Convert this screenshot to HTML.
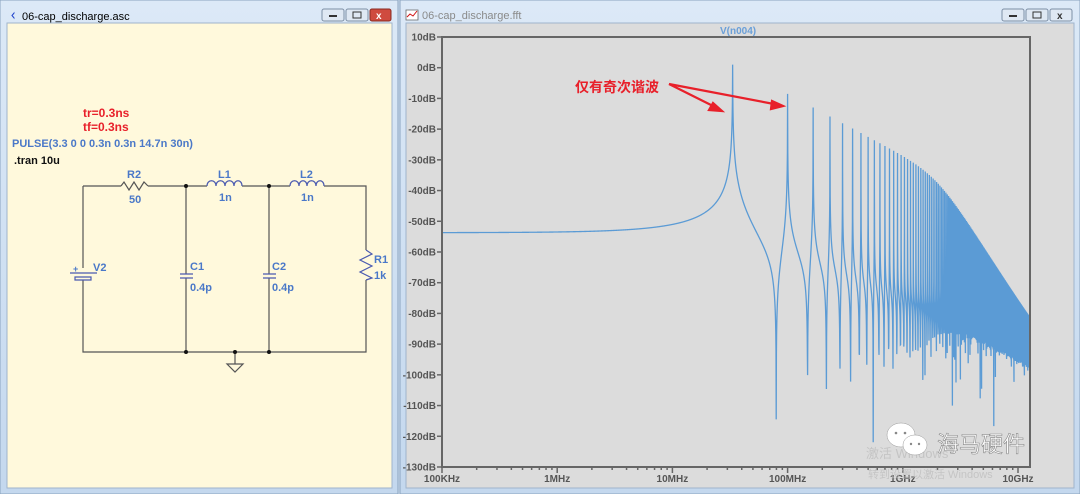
<!DOCTYPE html>
<html><head><meta charset="utf-8"><style>
html,body{margin:0;padding:0;width:1080px;height:494px;overflow:hidden;background:#cfdff0;font-family:"Liberation Sans","Noto Sans CJK SC",sans-serif}
svg{position:absolute;left:0;top:0}
</style></head><body>
<svg width="1080" height="494" viewBox="0 0 1080 494" xmlns="http://www.w3.org/2000/svg">
<defs>
<linearGradient id="tb" x1="0" y1="0" x2="0" y2="1"><stop offset="0" stop-color="#dce9f7"/><stop offset="1" stop-color="#c4d8ee"/></linearGradient>
<clipPath id="pc"><rect x="442" y="37" width="588" height="430"/></clipPath>
</defs>
<rect x="0" y="0" width="398" height="494" fill="url(#tb)" stroke="#8aa3bf"/>
<rect x="7" y="23" width="385" height="465" fill="#fff9dc" stroke="#9fb4cc"/>
<text x="22" y="20" font-size="11" fill="#000">06-cap_discharge.asc</text>
<text x="9" y="20" font-size="13" fill="#2244cc" font-weight="bold">ᚲ</text>
<g>
<rect x="322" y="9" width="22" height="12" rx="2" fill="#dfe8f3" stroke="#7d8fa6"/><rect x="329" y="15" width="8" height="2" fill="#333"/>
<rect x="346" y="9" width="22" height="12" rx="2" fill="#dfe8f3" stroke="#7d8fa6"/><rect x="353" y="12" width="8" height="6" fill="none" stroke="#333"/>
<rect x="370" y="9" width="21" height="12" rx="2" fill="#cf4b3f" stroke="#8a2b22"/><text x="376" y="19" font-size="10" fill="#fff" font-weight="bold">x</text>
</g>
<g stroke="#555" stroke-width="1.2" fill="none">
<path d="M83 186H121M148 186H207M242 186H290M324 186H366V250M366 280V352H83V280M83 268V186"/>
<path d="M121 186l3-4 5 8 5-8 5 8 5-8 4 4"/>
<path d="M186 186V274M186 278V352M269 186V274M269 278V352"/>
<path d="M366 250l6 4-12 6 12 6-12 6 12 6-6 2" stroke="#4a5ab0"/>
<path d="M235 352V364M227 364H243L235 372Z"/>
</g>
<g stroke="#4a5ab0" stroke-width="1.2" fill="none">
<path d="M207 186c0-7 9-7 9 0 0-7 9-7 9 0 0-7 9-7 9 0 0-7 8-7 8 0"/>
<path d="M290 186c0-7 9-7 9 0 0-7 8-7 8 0 0-7 9-7 9 0 0-7 8-7 8 0"/>
<path d="M180 274H193M180 278H193M263 274H276M263 278H276"/>
<path d="M70 273H97M75 277H91V280H75Z"/>
</g>
<g fill="#111"><circle cx="186" cy="186" r="2"/><circle cx="269" cy="186" r="2"/><circle cx="186" cy="352" r="2"/><circle cx="269" cy="352" r="2"/><circle cx="235" cy="352" r="2"/></g>
<g font-size="11" font-weight="bold" fill="#4a78c8">
<text x="127" y="178">R2</text><text x="129" y="203">50</text>
<text x="218" y="178">L1</text><text x="219" y="201">1n</text>
<text x="300" y="178">L2</text><text x="301" y="201">1n</text>
<text x="93" y="271">V2</text><text x="73" y="272" font-size="9">+</text>
<text x="190" y="270">C1</text><text x="190" y="291">0.4p</text>
<text x="272" y="270">C2</text><text x="272" y="291">0.4p</text>
<text x="374" y="263">R1</text><text x="374" y="279">1k</text>
<text x="12" y="147">PULSE(3.3 0 0 0.3n 0.3n 14.7n 30n)</text>
</g>
<text x="83" y="117" font-size="12" font-weight="bold" fill="#e8202a">tr=0.3ns</text>
<text x="83" y="131" font-size="12" font-weight="bold" fill="#e8202a">tf=0.3ns</text>
<text x="14" y="164" font-size="11" font-weight="bold" fill="#111">.tran 10u</text>
<rect x="400" y="0" width="680" height="494" fill="url(#tb)" stroke="#8aa3bf"/>
<rect x="406" y="23" width="668" height="465" fill="#dcdcdc" stroke="#9fb4cc"/>
<text x="422" y="19" font-size="11" fill="#8a8a8a">06-cap_discharge.fft</text>
<path d="M406 10h12v10h-12z" fill="#fff" stroke="#666" stroke-width=".8"/><path d="M407 17l3-3 3 2 4-5" stroke="#d01010" fill="none"/>
<g>
<rect x="1002" y="9" width="22" height="12" rx="2" fill="#dfe8f3" stroke="#7d8fa6"/><rect x="1009" y="15" width="8" height="2" fill="#333"/>
<rect x="1026" y="9" width="22" height="12" rx="2" fill="#dfe8f3" stroke="#7d8fa6"/><rect x="1033" y="12" width="8" height="6" fill="none" stroke="#333"/>
<rect x="1050" y="9" width="22" height="12" rx="2" fill="#dfe8f3" stroke="#7d8fa6"/><text x="1057" y="19" font-size="10" fill="#333" font-weight="bold">x</text>
</g>
<text x="720" y="34" font-size="10" font-weight="bold" fill="#6a9fd8">V(n004)</text>
<g id="axes"></g>
<path id="spec" d="" fill="none" stroke="#5b9bd5" stroke-width="1.3" clip-path="url(#pc)"/>
<rect x="442" y="37" width="588" height="430" fill="none" stroke="#666" stroke-width="2"/>
<text x="575" y="92" font-size="14" font-weight="bold" fill="#e8202a">仅有奇次谐波</text>
<g stroke="#e8202a" stroke-width="2.2" fill="#e8202a">
<path d="M669 84L713 106"/><path d="M722 111l-13-1 4-7z"/>
<path d="M669 84L774 104"/><path d="M783 106l-12 3 1-8z"/>
</g>
<text x="866" y="458" font-size="13" fill="#bbb" opacity=".7">激活 Windows</text>
<text x="868" y="478" font-size="11" fill="#bbb" opacity=".7">转到设置以激活 Windows</text>
<g fill="#fff" stroke="#999" stroke-width=".5">
<ellipse cx="901" cy="435" rx="14" ry="12"/><ellipse cx="915" cy="445" rx="12" ry="10"/>
</g>
<g fill="#888"><circle cx="896" cy="433" r="1.3"/><circle cx="905" cy="433" r="1.3"/><circle cx="911" cy="444" r="1.2"/><circle cx="919" cy="444" r="1.2"/></g>
<text x="937" y="452" font-size="22" fill="#fff" stroke="#888" stroke-width=".6">海马硬件</text>
</svg>
<script>
(function(){
var L=442,D=115.2,PD=430/140;
function X(f){return L+D*Math.log10(f/1e5);}
function Y(db){return 67.7-db*PD;}
var ax='';
for(var db=10;db>=-130;db-=10){var y=Y(db);ax+='<line x1="437" y1="'+y+'" x2="442" y2="'+y+'" stroke="#666" stroke-width="1.5"/><text x="436" y="'+(y+3.5)+'" font-size="10" font-weight="bold" fill="#555" text-anchor="end" font-family="Liberation Sans">'+db+'dB</text>';}
var labs=['100KHz','1MHz','10MHz','100MHz','1GHz','10GHz'];
for(var d=0;d<6;d++){for(var m=1;m<10;m++){var f=1e5*Math.pow(10,d)*m;var x=X(f);if(x>1031)break;var h=(m==1)?6:3;ax+='<line x1="'+x+'" y1="467" x2="'+x+'" y2="'+(467+h)+'" stroke="#666" stroke-width="1.5"/>';}
ax+='<text x="'+X(1e5*Math.pow(10,d))+'" y="482" font-size="10" font-weight="bold" fill="#555" text-anchor="middle" font-family="Liberation Sans">'+labs[d]+'</text>';}
document.getElementById('axes').innerHTML=ax;
var f0=33.33e6,Bw=50e3,fc=2.0e9,K=[];
for(var k=1;k*f0<1.3e10;k+=2){var f=k*f0;var p=1-20*Math.log10(k)-10*Math.log10(1+Math.pow(f/fc,4));K.push([f,Math.pow(10,p/20)]);}
function val(f){var s=0;for(var i=0;i<K.length;i++){var d=f-K[i][0];var a=K[i][1]*Bw/(Bw+Math.abs(d));s+=d>=0?a:-a;}
return 20*Math.log10(Math.abs(s)+1e-7);}
var fs=[];for(var x=L;x<=1031;x+=0.2){fs.push(1e5*Math.pow(10,(x-L)/D));}
for(var i=0;i<K.length;i++)fs.push(K[i][0]);
fs.sort(function(a,b){return a-b});
var p='';for(var i=0;i<fs.length;i++){var y=Y(val(fs[i]));if(y>480)y=480;p+=(i?'L':'M')+X(fs[i]).toFixed(2)+' '+y.toFixed(2);}
document.getElementById('spec').setAttribute('d',p);
})();
</script>
</body></html>
